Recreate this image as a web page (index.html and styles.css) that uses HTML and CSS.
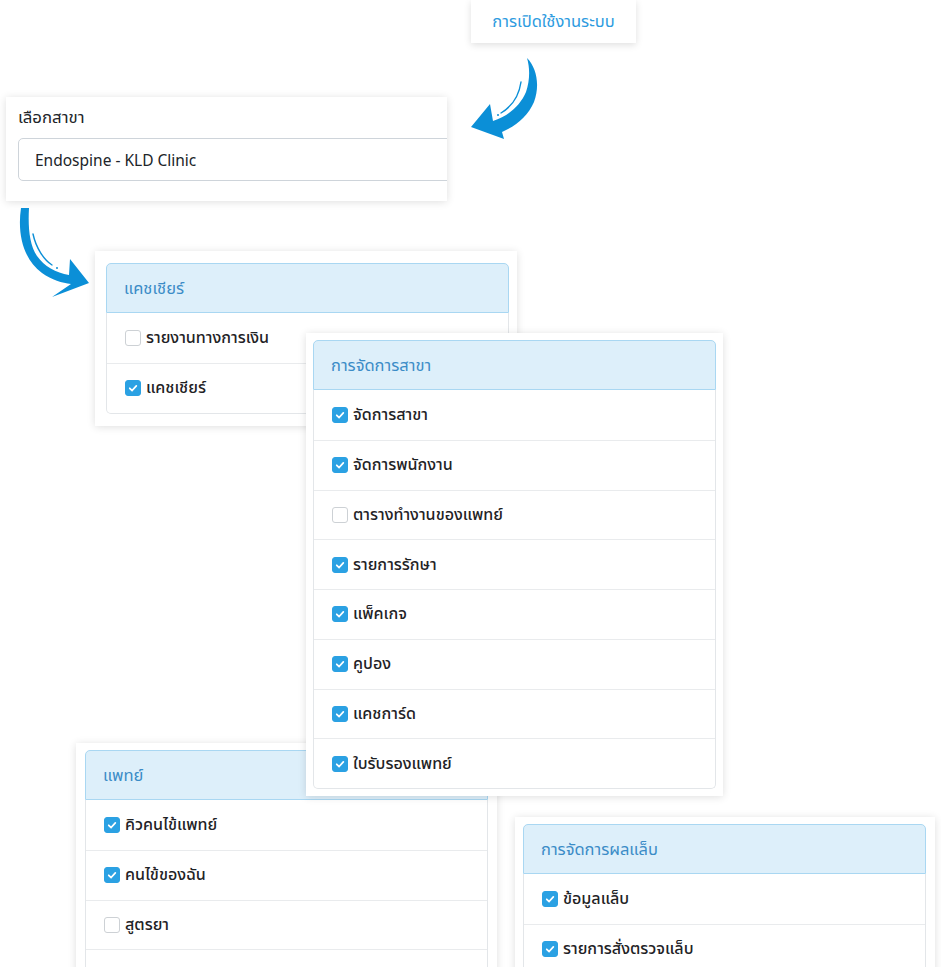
FILE: index.html
```html
<!DOCTYPE html>
<html lang="th">
<head>
<meta charset="utf-8">
<title>การเปิดใช้งานระบบ</title>
<link rel="stylesheet" href="styles.css">
</head>
<body>
<div class="canvas">
  <div class="topbtn">การเปิดใช้งานระบบ</div>

  <svg class="arrow arrow-1" viewBox="465 55 80 90" width="80" height="90">
    <path class="arrow-body" d="M527,58 C537,68 540,86 534,102 C528,116 516,126 502,132 L504,139 L471,127 L490,104 L493,121 C508,116 520,106 526,92 C530,80 530,68 527,58 Z"/>
    <path class="arrow-streak" d="M521,82 C519,96 511,107 501,113"/>
    <circle class="arrow-dot" cx="498" cy="115" r="1"/>
  </svg>

  <div class="panel p-select">
    <div class="select-label">เลือกสาขา</div>
    <div class="select-input">Endospine - KLD Clinic</div>
  </div>

  <svg class="arrow arrow-2" viewBox="10 200 90 100" width="90" height="100">
    <path class="arrow-body" d="M21,208 C17,235 24,260 42,273 C52,280 62,283 71,284 L52,297 L89,283 L70,259 L69,275 C56,273 44,266 37,256 C29,244 28,226 29,208 Z"/>
    <path class="arrow-streak" d="M33,234 C36,248 44,260 52,265"/>
    <circle class="arrow-dot" cx="57" cy="268" r="1"/>
  </svg>

  <div class="panel p-cashier">
    <div class="card">
      <div class="card-head">แคชเชียร์</div>
      <div class="card-body">
        <div class="row"><span class="cb"></span>รายงานทางการเงิน</div>
        <div class="row"><span class="cb on"><svg viewBox="0 0 16 16"><path d="M4.3 8.3 L7 10.9 L11.8 5.6"/></svg></span>แคชเชียร์</div>
      </div>
    </div>
  </div>

  <div class="panel p-doctor">
    <div class="card">
      <div class="card-head">แพทย์</div>
      <div class="card-body">
        <div class="row"><span class="cb on"><svg viewBox="0 0 16 16"><path d="M4.3 8.3 L7 10.9 L11.8 5.6"/></svg></span>คิวคนไข้แพทย์</div>
        <div class="row"><span class="cb on"><svg viewBox="0 0 16 16"><path d="M4.3 8.3 L7 10.9 L11.8 5.6"/></svg></span>คนไข้ของฉัน</div>
        <div class="row"><span class="cb"></span>สูตรยา</div>
        <div class="row"><span class="cb on"><svg viewBox="0 0 16 16"><path d="M4.3 8.3 L7 10.9 L11.8 5.6"/></svg></span></div>
      </div>
    </div>
  </div>

  <div class="panel p-branch">
    <div class="card">
      <div class="card-head">การจัดการสาขา</div>
      <div class="card-body">
        <div class="row"><span class="cb on"><svg viewBox="0 0 16 16"><path d="M4.3 8.3 L7 10.9 L11.8 5.6"/></svg></span>จัดการสาขา</div>
        <div class="row"><span class="cb on"><svg viewBox="0 0 16 16"><path d="M4.3 8.3 L7 10.9 L11.8 5.6"/></svg></span>จัดการพนักงาน</div>
        <div class="row"><span class="cb"></span>ตารางทำงานของแพทย์</div>
        <div class="row"><span class="cb on"><svg viewBox="0 0 16 16"><path d="M4.3 8.3 L7 10.9 L11.8 5.6"/></svg></span>รายการรักษา</div>
        <div class="row"><span class="cb on"><svg viewBox="0 0 16 16"><path d="M4.3 8.3 L7 10.9 L11.8 5.6"/></svg></span>แพ็คเกจ</div>
        <div class="row"><span class="cb on"><svg viewBox="0 0 16 16"><path d="M4.3 8.3 L7 10.9 L11.8 5.6"/></svg></span>คูปอง</div>
        <div class="row"><span class="cb on"><svg viewBox="0 0 16 16"><path d="M4.3 8.3 L7 10.9 L11.8 5.6"/></svg></span>แคชการ์ด</div>
        <div class="row"><span class="cb on"><svg viewBox="0 0 16 16"><path d="M4.3 8.3 L7 10.9 L11.8 5.6"/></svg></span>ใบรับรองแพทย์</div>
      </div>
    </div>
  </div>

  <div class="panel p-lab">
    <div class="card">
      <div class="card-head">การจัดการผลแล็บ</div>
      <div class="card-body">
        <div class="row"><span class="cb on"><svg viewBox="0 0 16 16"><path d="M4.3 8.3 L7 10.9 L11.8 5.6"/></svg></span>ข้อมูลแล็บ</div>
        <div class="row"><span class="cb on"><svg viewBox="0 0 16 16"><path d="M4.3 8.3 L7 10.9 L11.8 5.6"/></svg></span>รายการสั่งตรวจแล็บ</div>
      </div>
    </div>
  </div>
</div>
</body>
</html>
```
FILE: styles.css
```css
* { box-sizing: border-box; }
html, body { margin: 0; padding: 0; background: #fff; }
body {
  font-family: "Noto Sans", "Noto Sans Thai", "Open Sans", sans-serif;
  color: #212529;
  font-size: 15px;
}
.canvas {
  position: relative;
  width: 941px;
  height: 967px;
  overflow: hidden;
  background: #fff;
}

/* top button */
.topbtn {
  position: absolute;
  left: 471px;
  top: 0;
  width: 165px;
  height: 43px;
  display: flex;
  align-items: center;
  justify-content: center;
  background: #fff;
  color: #2d9be0;
  font-size: 16.5px;
  box-shadow: 0 2px 7px rgba(0, 0, 0, 0.13);
}

/* arrows */
.arrow { position: absolute; overflow: visible; z-index: 5; }
.arrow-1 { left: 465px; top: 55px; }
.arrow-2 { left: 10px; top: 200px; }
.arrow-body { fill: #0b8fd7; }
.arrow-streak { fill: none; stroke: #0b8fd7; stroke-width: 1.4; stroke-linecap: round; }
.arrow-dot { fill: #0b8fd7; }

/* panels */
.panel {
  position: absolute;
  background: #fff;
  box-shadow: 0 1px 8px rgba(0, 0, 0, 0.13);
}
.p-select {
  left: 6px;
  top: 97px;
  width: 441px;
  height: 104px;
  padding: 9px 0 0 12px;
  overflow: hidden;
  z-index: 1;
}
.select-label {
  line-height: 22px;
  height: 22px;
  margin-bottom: 10px;
  font-size: 16.8px;
}
.select-input {
  width: 470px;
  height: 43px;
  border: 1px solid #ced4da;
  border-radius: 5px;
  padding-left: 16px;
  display: flex;
  align-items: center;
  font-size: 15.5px;
  color: #212529;
}
.p-cashier { left: 95px; top: 251px; width: 422px; padding: 12px 8px 12px 11px; z-index: 1; }
.p-doctor { left: 76px; top: 743px; width: 421px; padding: 7px 9px; z-index: 2; }
.p-branch { left: 306px; top: 333px; width: 417px; padding: 7px; z-index: 3; }
.p-lab { left: 515px; top: 817px; width: 420px; padding: 7px 9px 7px 8px; z-index: 2; }

/* cards */
.card-head {
  height: 50px;
  background: #ddeffa;
  border: 1px solid #a9d7f2;
  border-radius: 5px 5px 0 0;
  padding-left: 17px;
  display: flex;
  align-items: center;
  color: #3b8cc7;
  font-size: 16.5px;
}
.card-body {
  border: 1px solid #e3e6e9;
  border-top: none;
  border-radius: 0 0 5px 5px;
}
.row {
  height: 49.75px;
  display: flex;
  align-items: center;
  padding-left: 18px;
  border-top: 1px solid #e9ebed;
  font-size: 16.1px;
  font-weight: 500;
  color: #1f2326;
}
.row:first-child { border-top: none; }
.cb {
  width: 16px;
  height: 16px;
  border-radius: 3px;
  border: 1px solid #cdd1d5;
  background: #fff;
  margin-right: 5px;
  flex: none;
  display: flex;
}
.cb.on {
  background: #2ba1e3;
  border-color: #2ba1e3;
}
.cb svg { width: 14px; height: 14px; }
.cb svg path { fill: none; stroke: #fff; stroke-width: 2; stroke-linecap: round; stroke-linejoin: round; }
```
